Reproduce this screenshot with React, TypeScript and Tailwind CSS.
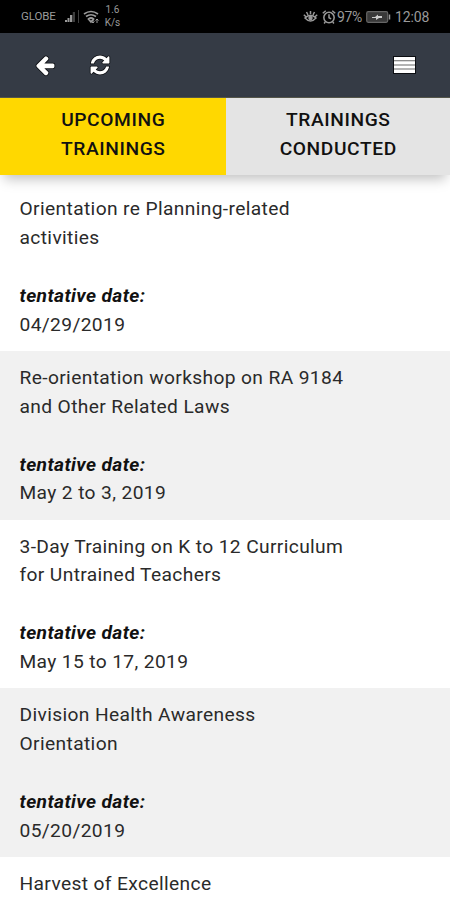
import React from "react";

type Training = { title: string[]; date?: string };

const trainings: Training[] = [
  { title: ["Orientation re Planning-related", "activities"], date: "04/29/2019" },
  { title: ["Re-orientation workshop on RA 9184", "and Other Related Laws"], date: "May 2 to 3, 2019" },
  { title: ["3-Day Training on K to 12 Curriculum", "for Untrained Teachers"], date: "May 15 to 17, 2019" },
  { title: ["Division Health Awareness", "Orientation"], date: "05/20/2019" },
  { title: ["Harvest of Excellence"] },
];

function StatusBar() {
  return (
    <div className="flex h-[33px] shrink-0 items-center bg-black tracking-normal text-[#9a9a9a]">
      <span className="ml-[21px] w-[36px] text-[11.5px] leading-none tracking-[-0.1px]">GLOBE</span>
      <svg className="ml-2 h-[13px] w-[15px]" viewBox="0 0 15 13" fill="currentColor">
        <path d="M0 10h2v2H0zM2.500 8h2v4h-2zM5 5h2.300v7H5z" />
        <path d="M7.800 2H10v10H7.800zM13 0h1v13h-1z" opacity=".4" />
      </svg>
      <svg className="ml-[3px] h-[14px] w-[17px]" viewBox="0 0 17 14" fill="none" stroke="currentColor" strokeWidth="1.7">
        <path d="M1 4Q8-1 15 4M3 6.500Q8 3 13 6.500M5.500 9Q8 7 10.500 9L8 12z" />
        <path d="M10 9v4M8.500 11.500 10 13l1.500-1.500M14 13V9M12.500 10.500 14 9l1.500 1.500" strokeWidth="1" />
      </svg>
      <div className="ml-[4px] w-[17px] text-center text-[10px] leading-[12.5px]">
        <div>1.6</div>
        <div>K/s</div>
      </div>
      <div className="ml-auto mr-[20px] flex items-center">
        <svg className="h-[13px] w-[15px]" viewBox="0 0 15 13" fill="none" stroke="currentColor" strokeWidth="1.5">
          <path d="M2 8Q7.500 2.500 13 8Q7.500 14 2 8zM7.500 1v3M3.500 2 5 4.800M11.500 2 10 4.800M.800 4.800 3 6.800M14.200 4.800 12 6.800" />
          <circle cx="7.500" cy="8" r="1.500" fill="currentColor" />
        </svg>
        <svg className="ml-[4px] h-[14px] w-[14px]" viewBox="0 0 13 13" fill="none" stroke="currentColor" strokeWidth="1.400">
          <circle cx="6.500" cy="7" r="4.800" />
          <path d="M6.500 4v3.200l2 1M.700 3 3.500.700M12.300 3 9.500.700M3 11l-1 1.500M10 11l1 1.500" />
        </svg>
        <span className="ml-[1px] w-[27px] text-[14px] leading-none tracking-[-0.4px]">97%</span>
        <svg className="ml-[2px] h-[12px] w-[25px]" viewBox="0 0 25 12">
          <rect x=".7" y=".7" width="21" height="10.600" rx="1.500" fill="#393939" stroke="#666" strokeWidth="1.200" />
          <path d="M23.500 3.500v5" stroke="#999" strokeWidth="1.500" />
          <path d="M6 6h3l3-2.500V5h4v2h-3l-3 2V7H6z" fill="#ccc" />
        </svg>
        <span className="ml-[4px] w-[35px] text-[14px] leading-none tracking-[-0.1px]">12:08</span>
      </div>
    </div>
  );
}

function NavBar() {
  return (
    <nav className="flex h-[64px] shrink-0 items-center bg-[#353b45] text-white">
      <button className="ml-[34px]" aria-label="Back">
        <svg className="h-[22px] w-[22px] overflow-visible stroke-[#0c0e12] [paint-order:stroke]" viewBox="0 0 1792 1792" fill="currentColor" strokeWidth="130">
          <path d="M1664 896v128q0 53-32.5 90.5t-84.5 37.5h-704l293 294q38 36 38 90t-38 90l-75 76q-37 37-90 37-52 0-91-37l-651-652q-37-37-37-90 0-52 37-91l651-650q38-38 91-38 52 0 90 38l75 74q38 38 38 91t-38 91l-293 293h704q52 0 84.5 37.5t32.5 90.5z" />
        </svg>
      </button>
      <button className="ml-[33px]" aria-label="Refresh">
        <svg className="h-[22px] w-[22px] overflow-visible stroke-[#0c0e12] [paint-order:stroke]" viewBox="0 0 1792 1792" fill="currentColor" strokeWidth="130">
          <path d="M1639 1056q0 5-1 7-64 268-268 434.5t-478 166.5q-146 0-282.5-55t-243.5-157l-129 129q-19 19-45 19t-45-19-19-45v-448q0-26 19-45t45-19h448q26 0 45 19t19 45-19 45l-137 137q71 66 161 102t187 36q134 0 250-65t186-179q11-17 53-117 8-23 30-23h192q13 0 22.5 9.5t9.5 22.5zm25-800v448q0 26-19 45t-45 19h-448q-26 0-45-19t-19-45 19-45l138-138q-148-137-349-137-134 0-250 65t-186 179q-11 17-53 117-8 23-30 23h-199q-13 0-22.5-9.5t-9.5-22.500v-7q65-268 270-434.5t480-166.5q146 0 284 55.5t245 156.5l130-129q19-19 45-19t45 19 19 45z" />
        </svg>
      </button>
      <button className="ml-auto mr-[34px]" aria-label="Menu">
        <svg className="h-[18px] w-[23px] overflow-visible" viewBox="0 0 23 18">
          <path d="M0 0h23v18H0z" fill="#0c0e12" />
          <path d="M1 1h21v16H1z" fill="#666" />
          <path d="M1 1h21v3.200H1zM1 5.200h21v3.200H1zM1 9.400h21v3.200H1zM1 13.600h21V17H1z" fill="#fff" />
        </svg>
      </button>
    </nav>
  );
}

export default function App() {
  return (
    <div className="flex h-[900px] w-[450px] flex-col overflow-hidden bg-white font-['Roboto',sans-serif] text-[19.2px] leading-[28.8px] tracking-[0.37px] text-[#2a2a2a]">
      <StatusBar />
      <NavBar />
      <div className="relative grid h-[78px] shrink-0 grid-cols-[225.5px_1fr] border-t border-[#55564a] text-center font-medium tracking-[0.6px] text-[#111] shadow-[0_8px_12px_-4px_rgba(0,0,0,0.25)]">
        <button className="bg-[#ffd800] pb-[11px] pl-px pt-[8px]">UPCOMING<br />TRAININGS</button>
        <button className="bg-[#e4e4e4] pb-[11px] pl-px pt-[8px]">TRAININGS<br />CONDUCTED</button>
      </div>
      <ul className="mt-[7px]">
        {trainings.map((t) => (
          <li key={t.title[0]} className="h-[168.8px] pl-[19.5px] pt-[13px] odd:bg-white even:bg-[#f1f1f1]">
            {t.title.map((line) => (
              <div key={line} className="whitespace-nowrap">{line}</div>
            ))}
            {t.date && (
              <>
                <div className="mt-[29.3px] font-bold italic text-[#111]">tentative date:</div>
                <div>{t.date}</div>
              </>
            )}
          </li>
        ))}
      </ul>
    </div>
  );
}
